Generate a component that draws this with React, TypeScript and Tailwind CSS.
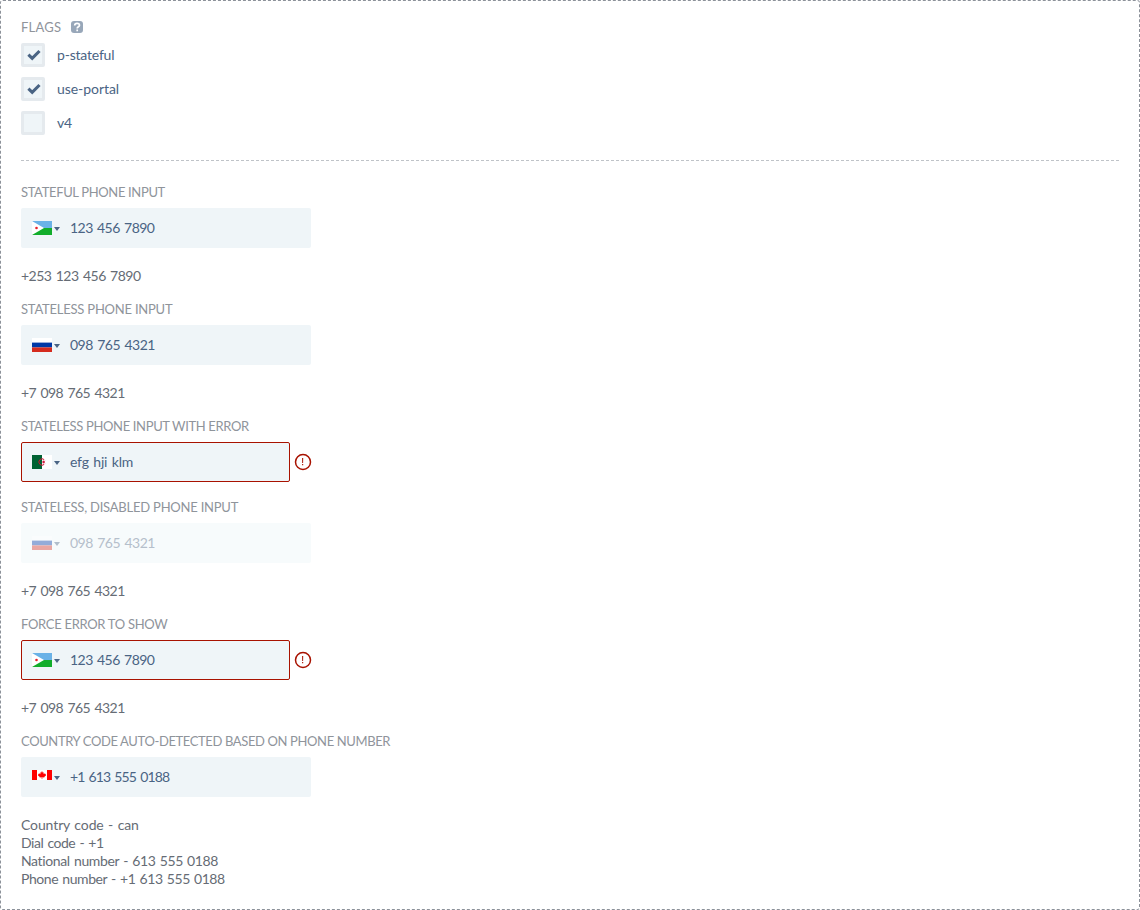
import type { ReactNode } from 'react';

function Flag({ code }: { code: string }) {
  return (
    <svg width="20" height="14" viewBox="0 0 20 14" className="block shrink-0">
      {code === 'dji' && (
        <>
          <path fill="#6ab2e7" d="M0 0h20v7H0z" />
          <path fill="#12ad2b" d="M0 7h20v7H0z" />
          <path fill="#fff" d="M0 0l12 7-12 7z" />
          <circle cx="4.5" cy="7" r="1.3" fill="#e8202a" />
        </>
      )}
      {code === 'rus' && (
        <>
          <path fill="#fff" d="M0 0h20v5H0z" />
          <path fill="#0039a6" d="M0 4.6h20v4.8H0z" />
          <path fill="#d52b1e" d="M0 9.4h20V14H0z" />
        </>
      )}
      {code === 'dza' && (
        <>
          <path fill="#006233" d="M0 0h10v14H0z" />
          <path fill="#fff" d="M10 0h10v14H10z" />
          <path fill="none" stroke="#d21034" strokeWidth="1" d="M12.2 4.6a3.2 3.2 0 1 0 0 4.8" />
          <path fill="#d21034" d="M9.2 7l1.6-.5.2-1.6.9 1.3 1.5-.6-1 1.4 1 1.4-1.5-.6-.9 1.3-.2-1.6z" />
        </>
      )}
      {code === 'can' && (
        <>
          <path fill="#fff" d="M0 0h20v10H0z" />
          <path fill="#f00" d="M0 0h5v10H0zM15 0h5v10h-5z" />
          <path
            fill="#f00"
            d="M10 1l.9 1.7.9-.4-.3 2 1.1-1 .3.6 1.1-.2-.4 1.2.6.4-2 1.6.2.7-2.1-.3V9h-.6V7.3l-2.1.3.2-.7-2-1.6.6-.4L6 3.7l1.1.2.3-.6 1.1 1-.3-2 .9.4z"
          />
        </>
      )}
    </svg>
  );
}

function Label({ children, spacing }: { children: ReactNode; spacing: string }) {
  return (
    <div className={`h-[25px] whitespace-nowrap text-[13px] leading-[18px] text-[#8f949b] ${spacing}`}>
      {children}
    </div>
  );
}

function PhoneInput({
  code,
  value,
  spacing,
  error = false,
  disabled = false,
}: {
  code: string;
  value: string;
  spacing: string;
  error?: boolean;
  disabled?: boolean;
}) {
  return (
    <div className="flex h-10 w-[291px] items-center">
      <div
        className={`flex h-10 shrink-0 items-center rounded-[2px] border pl-[10px] ${
          error ? 'w-[269px] border-[#a81200]' : 'w-[290px] border-transparent'
        } ${disabled ? 'bg-[#f7fbfc]' : 'bg-[#eff5f8]'}`}
      >
        <div className={`flex items-center ${disabled ? 'opacity-40' : ''}`}>
          <Flag code={code} />
          <svg width="6" height="4" viewBox="0 0 6 4" className="ml-[2px] mt-[2px]">
            <path fill="#4a6484" d="M0 0h6L3 4z" />
          </svg>
        </div>
        <span
          className={`ml-[10px] whitespace-nowrap text-sm leading-[18px] [word-spacing:1.3px] ${
            disabled ? 'text-[#b5bfcb]' : 'text-[#4a6484]'
          } ${spacing}`}
        >
          {value}
        </span>
      </div>
      {error && (
        <svg width="18" height="18" viewBox="0 0 18 18" className="ml-[4px] shrink-0">
          <circle cx="9" cy="9" r="7.5" fill="none" stroke="#a81200" strokeWidth="1.5" />
          <path fill="#a81200" d="M8.1 5h1.1l-.1 5h-.9zM8.1 11h1.1v1.2H8.1z" />
        </svg>
      )}
    </div>
  );
}

function Result({ children, spacing }: { children: ReactNode; spacing: string }) {
  return (
    <p
      className={`mt-[19px] mb-[15px] h-[18px] whitespace-nowrap text-sm leading-[18px] text-[#666c75] [word-spacing:1.3px] ${spacing}`}
    >
      {children}
    </p>
  );
}

function FlagOption({ label, checked = false, spacing }: { label: string; checked?: boolean; spacing: string }) {
  return (
    <div className="mb-[10px] flex h-6 items-center">
      <span className="flex size-6 items-center justify-center rounded-[2px] border-3 border-[#e5eaee] bg-[#eff5f8]">
        {checked && (
          <svg width="14" height="12" viewBox="0 0 14 12" className="-mt-px ml-px">
            <path fill="none" stroke="#4a6484" strokeWidth="3.1" d="M1.4 5.7l3.8 3.7L12.5 2" />
          </svg>
        )}
      </span>
      <span className={`ml-3 text-sm leading-[18px] text-[#4a6484] ${spacing}`}>{label}</span>
    </div>
  );
}

export default function App() {
  return (
    <main className="h-[910px] w-[1140px] overflow-hidden rounded-[3px] border border-dashed border-[#8c9199] bg-white px-5 pt-[17px] font-['Lato','Open_Sans',sans-serif]">
      <div className="flex h-[25px] items-start text-[13px] leading-[18px] text-[#8f949b]">
        <span className="tracking-[0.2px]">FLAGS</span>
        <svg width="12" height="12" viewBox="0 0 12 12" className="ml-[10px] mt-[3px]">
          <rect width="12" height="12" rx="3" fill="#98a7b9" />
          <path
            fill="none"
            stroke="#fff"
            strokeWidth="1.7"
            d="M3.7 4.5c0-3 4.8-2.8 4.8-.3 0 1.6-2.3 1.4-2.3 3.2M6.2 8.5v1.8"
          />
        </svg>
      </div>
      <FlagOption label="p-stateful" checked spacing="tracking-[-0.2px]" />
      <FlagOption label="use-portal" checked spacing="tracking-[-0.05px]" />
      <FlagOption label="v4" spacing="tracking-[-0.2px]" />
      <div className="mt-[25px] mb-[22px] h-px border-t border-dashed border-[#bfc3c8]" />

      <Label spacing="tracking-[-0.35px]">STATEFUL PHONE INPUT</Label>
      <PhoneInput code="dji" value="123 456 7890" spacing="tracking-[-0.55px]" />
      <Result spacing="tracking-[-0.52px]">+253 123 456 7890</Result>

      <Label spacing="tracking-[-0.22px]">STATELESS PHONE INPUT</Label>
      <PhoneInput code="rus" value="098 765 4321" spacing="tracking-[-0.5px]" />
      <Result spacing="tracking-[-0.56px]">+7 098 765 4321</Result>

      <Label spacing="tracking-[-0.35px]">STATELESS PHONE INPUT WITH ERROR</Label>
      <PhoneInput code="dza" value="efg hji klm" spacing="tracking-[-0.24px]" error />
      <div className="h-4" />

      <Label spacing="tracking-[-0.22px]">STATELESS, DISABLED PHONE INPUT</Label>
      <PhoneInput code="rus" value="098 765 4321" spacing="tracking-[-0.5px]" disabled />
      <Result spacing="tracking-[-0.56px]">+7 098 765 4321</Result>

      <Label spacing="tracking-[-0.3px]">FORCE ERROR TO SHOW</Label>
      <PhoneInput code="dji" value="123 456 7890" spacing="tracking-[-0.55px]" error />
      <Result spacing="tracking-[-0.56px]">+7 098 765 4321</Result>

      <Label spacing="tracking-[-0.375px]">COUNTRY CODE AUTO-DETECTED BASED ON PHONE NUMBER</Label>
      <PhoneInput code="can" value="+1 613 555 0188" spacing="tracking-[-0.86px]" />
      <div className="mt-[19px] text-sm leading-[18px] text-[#666c75] [word-spacing:1px]">
        <div className="tracking-[-0.11px]">Country code - can</div>
        <div className="tracking-[-0.46px]">Dial code - +1</div>
        <div className="tracking-[-0.37px]">National number - 613 555 0188</div>
        <div className="tracking-[-0.43px]">Phone number - +1 613 555 0188</div>
      </div>
    </main>
  );
}
